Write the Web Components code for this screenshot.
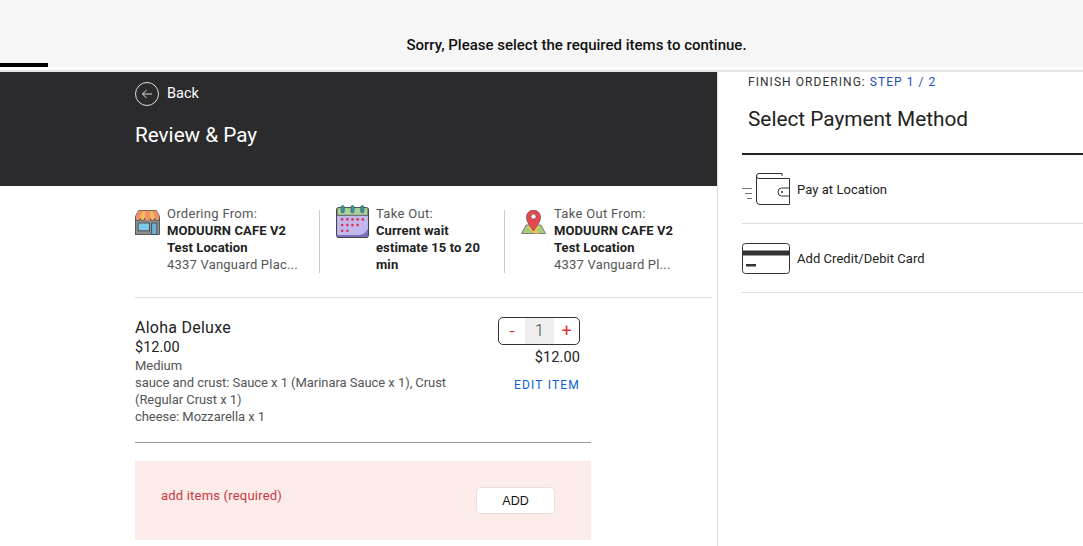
<!DOCTYPE html>
<html>
<head>
<meta charset="utf-8">
<style>
  html, body { margin: 0; height: 100%; overflow: hidden; background: #fff; }
  body { font-family: "Roboto", "Liberation Sans", sans-serif; color: #222; }
</style>
</head>
<body>
<checkout-page>
  <alert-bar slot="alert">Sorry, Please select the required items to continue.</alert-bar>

  <review-header slot="main"></review-header>
  <info-strip slot="main">
    <info-block heading="Ordering From:" address="4337 Vanguard Plac...">
      <svg slot="icon" width="25" height="25" viewBox="0 0 24 24">
        <rect x=".5" y="7" width="23" height="16.500" fill="#8d9093" stroke="#444" stroke-width=".8"/>
        <rect x="3" y="12.500" width="11" height="7.500" fill="#7fc8e6" stroke="#444" stroke-width=".8"/>
        <rect x="16" y="12.500" width="5" height="11" fill="#69b3d3" stroke="#444" stroke-width=".8"/>
        <path d="M3.500.5H20.500L23.500 6v2a2.300 2.300 0 0 1-4.600 0 2.200 2.200 0 0 1-4.400 0 2.500 2.500 0 0 1-5 0 2.200 2.200 0 0 1-4.400 0A2.300 2.300 0 0 1 .5 8V6z" fill="#f2bd58" stroke="#444" stroke-width=".8"/>
        <path d="M3.500.8H7.500L5.100 6v2a2.300 2.300 0 0 1-4.300 0V6zM10 .8h4L14.500 6v2a2.500 2.500 0 0 1-5 0V6zM16.500.8h4L23.200 6v2a2.300 2.300 0 0 1-4.300 0V6z" fill="#ef8f6e"/>
      </svg>
      <b>MODUURN CAFE V2</b><b>Test Location</b>
    </info-block>
    <info-block heading="Take Out:" divided>
      <svg slot="icon" style="margin-top:-5px" width="33" height="33" viewBox="0 0 32 32">
        <rect x=".5" y="2.500" width="31" height="29" rx="3" fill="#7e6fc0" stroke="#444"/>
        <path d="M1 10h30v13q-3 6-9 6H1z" fill="#c3b8ec"/>
        <path d="M1 3.500q0-1 2-1h26q2 0 2 1V10H1z" fill="#a9cf9a" stroke="#444" stroke-width=".7"/>
        <g fill="#2f9fb3" stroke="#333" stroke-width=".5"><rect x="5" y=".5" width="3" height="7" rx="1.500"/><rect x="14.500" y=".5" width="3" height="7" rx="1.500"/><rect x="24" y=".5" width="3" height="7" rx="1.500"/></g>
        <g fill="#d9365a"><circle cx="6" cy="14" r="1.300"/><circle cx="11" cy="14" r="1.300"/><circle cx="16" cy="14" r="1.300"/><circle cx="21" cy="14" r="1.300"/><circle cx="26" cy="14" r="1.300"/><circle cx="6" cy="19.500" r="1.300"/><circle cx="11" cy="19.500" r="1.300"/><circle cx="16" cy="19.500" r="1.300"/><circle cx="21" cy="19.500" r="1.300"/><circle cx="6" cy="25" r="1.300"/><circle cx="11" cy="25" r="1.300"/></g>
      </svg>
      <b style="max-width:112px">Current wait estimate 15 to 20 min</b>
    </info-block>
    <info-block heading="Take Out From:" address="4337 Vanguard Pl..." divided>
      <svg slot="icon" style="margin-right:1px" width="25" height="25" viewBox="0 0 25 25">
        <path d="M5 15h15l4.500 8.500H.5z" fill="#a8c97f" stroke="#555" stroke-width=".7"/>
        <path d="M6.500 17.500l7 6h4.500l-2-3.500 3-4.500H8z" fill="#f2c14e"/>
        <path d="M12.500 21C9 15.500 5.500 12.500 5.500 7a7 7 0 0 1 14 0c0 5.500-3.500 8.500-7 14z" fill="#e8474c" stroke="#555" stroke-width=".7"/>
        <circle cx="12.500" cy="6.500" r="2.500" fill="#fff" stroke="#555" stroke-width=".6"/>
      </svg>
      <b>MODUURN CAFE V2</b><b>Test Location</b>
    </info-block>
  </info-strip>
  <cart-item slot="main" name="Aloha Deluxe" price="$12.00">
    <div>Medium</div>
    <div>sauce and crust: Sauce x 1 (Marinara Sauce x 1), Crust (Regular Crust x 1)</div>
    <div>cheese: Mozzarella x 1</div>
  </cart-item>
  <required-box slot="main" label="add items (required)"></required-box>

  <payment-panel slot="side">
    <pay-option label="Pay at Location">
      <svg slot="icon" width="48" height="32" viewBox="0 0 48 32">
        <g fill="none" stroke="#333" stroke-width="1">
          <path d="M14.500 3q0-2.500 2.500-2.500H40V3"/>
          <path d="M14.500 3q0 2.500 2.500 2.500h30.500V15M47.500 23v8.500H18q-3.500 0-3.500-3.500V3"/>
          <path d="M47.500 15h-8q-3.500 0-3.500 4t3.500 4h8z"/>
        </g>
        <circle cx="40" cy="19" r="1" fill="#333"/>
        <path d="M0 15.500h10M3 20.500h7M5 25.500h5" stroke="#777" stroke-width="1"/>
      </svg>
    </pay-option>
    <pay-option label="Add Credit/Debit Card">
      <svg slot="icon" width="48" height="31" viewBox="0 0 48 31">
        <rect x=".5" y=".5" width="47" height="30" rx="3" fill="none" stroke="#333"/>
        <rect x="1" y="7.500" width="46" height="5" fill="#333"/>
        <rect x="4" y="21" width="10" height="2.500" fill="#333"/>
      </svg>
    </pay-option>
  </payment-panel>
</checkout-page>

<script>
// shared font stack comes through inheritance from body
class CheckoutPage extends HTMLElement {
  constructor() {
    super();
    this.attachShadow({ mode: "open" }).innerHTML = `
      <style>
        :host { display: grid; grid-template-rows: 67px 1fr; height: 546px; overflow: hidden; }
        .cols { display: grid; grid-template-columns: 718px 1fr; border-top: 2px solid #e4e4e4; margin-top: 3px; min-height: 0; }
        .main { display: flex; flex-direction: column; border-right: 1px solid #ddd; min-width: 0; }
        .side { padding-left: 24px; min-width: 0; }
      </style>
      <slot name="alert"></slot>
      <div class="cols">
        <div class="main"><slot name="main"></slot></div>
        <div class="side"><slot name="side"></slot></div>
      </div>`;
  }
}
customElements.define("checkout-page", CheckoutPage);

class AlertBar extends HTMLElement {
  constructor() {
    super();
    this.attachShadow({ mode: "open" }).innerHTML = `
      <style>
        :host { display: flex; position: relative; background: #f6f6f6; height: 67px; box-sizing: border-box; justify-content: center; padding: 37px 0 0 70px; font: 500 15px/16px "Roboto", sans-serif; color: #111; }
        .bar { position: absolute; left: 0; bottom: 0; width: 48px; height: 4px; background: #000; }
      </style>
      <span><slot></slot></span><div class="bar"></div>`;
  }
}
customElements.define("alert-bar", AlertBar);

class ReviewHeader extends HTMLElement {
  constructor() {
    super();
    this.attachShadow({ mode: "open" }).innerHTML = `
      <style>
        :host { display: block; background: #2b2b2d; height: 114px; box-sizing: border-box; padding: 10px 0 0 135px; color: #fff; }
        .back { display: flex; align-items: center; gap: 8px; font-size: 14.500px; line-height: 24px; }
        h1 { margin: 16px 0 0; font: 400 20.700px/26px "Roboto", sans-serif; }
      </style>
      <div class="back">
        <svg width="24" height="24" viewBox="0 0 24 24" fill="none" stroke="#ddd">
          <circle cx="12" cy="12" r="11.500"/>
          <path d="M17 12H7.500M11.500 8l-4 4 4 4"/>
        </svg>
        <span>Back</span>
      </div>
      <h1>Review &amp; Pay</h1>`;
  }
}
customElements.define("review-header", ReviewHeader);

class InfoStrip extends HTMLElement {
  constructor() {
    super();
    this.attachShadow({ mode: "open" }).innerHTML = `
      <style>
        :host { display: grid; grid-template-columns: 184px 185px 1fr; margin: 0 5px 0 135px; padding: 24px 0 24px; border-bottom: 1px solid #ddd; height: 63px; }
      </style>
      <slot></slot>`;
  }
}
customElements.define("info-strip", InfoStrip);

class InfoBlock extends HTMLElement {
  constructor() {
    super();
    const heading = this.getAttribute("heading");
    const address = this.getAttribute("address");
    this.attachShadow({ mode: "open" }).innerHTML = `
      <style>
        :host { display: flex; gap: 7px; font-size: 13px; line-height: 17px; color: #555; height: 63px; }
        :host([divided]) { border-left: 1px solid #ccc; padding-left: 16px; }
        .icon { flex: none; }
        ::slotted(svg) { display: block; }
        .text { min-width: 0; margin-top: -5px; }
        .head { letter-spacing: .3px; }
        ::slotted(b) { display: block; color: #222; font-weight: 700; letter-spacing: .1px; }
        .addr { white-space: nowrap; letter-spacing: .2px; }
      </style>
      <div class="icon"><slot name="icon"></slot></div>
      <div class="text">
        <div class="head">${heading}</div>
        <slot></slot>
        ${address ? `<div class="addr">${address}</div>` : ""}
      </div>`;
  }
}
customElements.define("info-block", InfoBlock);

class QtyStepper extends HTMLElement {
  constructor() {
    super();
    this.attachShadow({ mode: "open" }).innerHTML = `
      <style>
        :host { display: grid; grid-template-columns: 26px 29px 25px; width: 82px; height: 28px; box-sizing: border-box; border: 1px solid #333; border-radius: 5px; overflow: hidden; text-align: center; font-size: 16px; line-height: 26px; }
        .op { color: #d9363e; font-size: 18px; }
        .n { background: #efefef; color: #444; font-weight: 300; }
      </style>
      <span class="op">-</span><span class="n">1</span><span class="op">+</span>`;
  }
}
customElements.define("qty-stepper", QtyStepper);

class CartItem extends HTMLElement {
  constructor() {
    super();
    this.attachShadow({ mode: "open" }).innerHTML = `
      <style>
        :host { display: flex; justify-content: space-between; width: 456px; box-sizing: border-box; margin-left: 135px; padding: 20px 11px 17px 0; border-bottom: 1px solid #999; height: 145px; }
        .left { width: 320px; }
        .name { font-size: 16px; line-height: 19px; color: #222; letter-spacing: .25px; }
        .price { font-size: 14.500px; line-height: 19px; color: #222; margin-top: 1px; }
        .mods { font-size: 13px; line-height: 17px; color: #555; letter-spacing: -.05px; }
        .right { display: flex; flex-direction: column; align-items: flex-end; margin-top: -1px; }
        .total { font-size: 14.500px; line-height: 19px; margin-top: 3px; color: #222; letter-spacing: .1px; }
        .edit { font-size: 12px; line-height: 14px; margin-top: 11px; letter-spacing: 1.200px; color: #0b5fd8; }
      </style>
      <div class="left">
        <div class="name">${this.getAttribute("name")}</div>
        <div class="price">${this.getAttribute("price")}</div>
        <div class="mods"><slot></slot></div>
      </div>
      <div class="right">
        <qty-stepper></qty-stepper>
        <div class="total">${this.getAttribute("price")}</div>
        <div class="edit">EDIT ITEM</div>
      </div>`;
  }
}
customElements.define("cart-item", CartItem);

class RequiredBox extends HTMLElement {
  constructor() {
    super();
    this.attachShadow({ mode: "open" }).innerHTML = `
      <style>
        :host { display: flex; justify-content: space-between; width: 456px; height: 79px; box-sizing: border-box; margin: 18px 0 0 135px; padding: 26px 36px 0 26px; background: #fbecea; }
        .label { color: #c9393f; font-size: 13px; line-height: 17px; letter-spacing: .2px; }
        button { width: 79px; height: 27px; background: #fff; border: 1px solid #e6e0e0; border-radius: 4px; font: 12.500px "Liberation Sans", sans-serif; color: #111; padding: 0; }
      </style>
      <span class="label">${this.getAttribute("label")}</span>
      <button>ADD</button>`;
  }
}
customElements.define("required-box", RequiredBox);

class PaymentPanel extends HTMLElement {
  constructor() {
    super();
    this.attachShadow({ mode: "open" }).innerHTML = `
      <style>
        :host { display: block; }
        .step { font-size: 12px; line-height: 14px; letter-spacing: 1.050px; color: #333; padding: 3px 0 0 6px; }
        .step span { color: #1a50b8; }
        h2 { margin: 18px 0 0; padding: 0 0 22px 6px; font: 400 20.800px/24px "Roboto", sans-serif; color: #222; border-bottom: 2px solid #222; }
      </style>
      <div class="step">FINISH ORDERING: <span>STEP 1 / 2</span></div>
      <h2>Select Payment Method</h2>
      <slot></slot>`;
  }
}
customElements.define("payment-panel", PaymentPanel);

class PayOption extends HTMLElement {
  constructor() {
    super();
    this.attachShadow({ mode: "open" }).innerHTML = `
      <style>
        :host { display: flex; align-items: center; gap: 7px; height: 69px; box-sizing: border-box; border-bottom: 1px solid #ddd; font-size: 13px; color: #222; }
        .icon { width: 48px; display: flex; }
        span { letter-spacing: .05px; }
      </style>
      <div class="icon"><slot name="icon"></slot></div>
      <span>${this.getAttribute("label")}</span>`;
  }
}
customElements.define("pay-option", PayOption);
</script>
</body>
</html>
